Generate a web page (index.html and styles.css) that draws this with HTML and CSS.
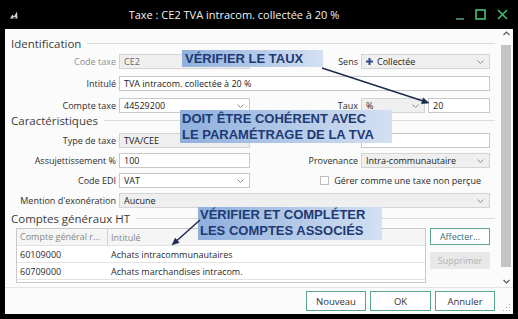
FILE: index.html
```html
<!DOCTYPE html>
<html lang="fr">
<head>
<meta charset="utf-8">
<title>Taxe</title>
<link rel="stylesheet" href="styles.css">
</head>
<body>
<div class="window">
  <header class="titlebar">
    <svg class="app-icon" width="9" height="8" viewBox="0 0 9 8"><path d="M1 7.5 L3.5 3.5 L5 5.5 L8 0.5 L8.5 7.5 Z" fill="#d6d6d6"/><rect x="4.5" y="6" width="2" height="1.5" fill="#000"/></svg>
    <div class="title">Taxe : CE2 TVA intracom. collectée à 20 %</div>
    <div class="controls">
      <svg width="10" height="11" viewBox="0 0 10 11"><line x1="1" y1="10" x2="9" y2="10" stroke="#5f9d7b" stroke-width="1.5"/></svg>
      <svg width="11" height="11" viewBox="0 0 11 11"><rect x="1" y="1" width="9" height="9" fill="none" stroke="#3dbb6c" stroke-width="1.7"/></svg>
      <svg width="11" height="11" viewBox="0 0 11 11"><path d="M1 1 L10 10 M10 1 L1 10" stroke="#3dbb6c" stroke-width="1.7" fill="none"/></svg>
    </div>
  </header>

  <div class="client">
    <div class="main">
      <div class="form">
        <div class="section-head">Identification</div>
        <div class="grid grid-ident">
          <div class="lbl muted">Code taxe</div>
          <div class="field grey muted-text">CE2</div>
          <div class="lbl">Sens</div>
          <div class="field grey select"><span class="sel-val"><svg class="plus" width="7" height="7" viewBox="0 0 7 7"><path d="M3.5 0 V7 M0 3.5 H7" stroke="#2c4a88" stroke-width="2"/></svg>Collectée</span><svg class="chev" width="7" height="4" viewBox="0 0 7 4"><path d="M0.5 0.5 L3.5 3.5 L6.5 0.5" fill="none" stroke="#8a8a8a"/></svg></div>

          <div class="lbl">Intitulé</div>
          <div class="field span3">TVA intracom. collectée à 20 %</div>

          <div class="lbl">Compte taxe</div>
          <div class="field select"><span>44529200</span><svg class="chev" width="7" height="4" viewBox="0 0 7 4"><path d="M0.5 0.5 L3.5 3.5 L6.5 0.5" fill="none" stroke="#8a8a8a"/></svg></div>
          <div class="lbl">Taux</div>
          <div class="pair">
            <div class="field grey select rate"><span>%</span><svg class="chev" width="7" height="4" viewBox="0 0 7 4"><path d="M0.5 0.5 L3.5 3.5 L6.5 0.5" fill="none" stroke="#8a8a8a"/></svg></div>
            <div class="field value">20</div>
          </div>
        </div>

        <div class="section-head">Caractéristiques</div>
        <div class="grid grid-carac">
          <div class="lbl">Type de taxe</div>
          <div class="field grey">TVA/CEE</div>
          <div class="lbl"></div>
          <div class="field"></div>

          <div class="lbl">Assujettissement %</div>
          <div class="field">100</div>
          <div class="lbl">Provenance</div>
          <div class="field grey select"><span>Intra-communautaire</span><svg class="chev" width="7" height="4" viewBox="0 0 7 4"><path d="M0.5 0.5 L3.5 3.5 L6.5 0.5" fill="none" stroke="#8a8a8a"/></svg></div>

          <div class="lbl">Code EDI</div>
          <div class="field select"><span>VAT</span><svg class="chev" width="7" height="4" viewBox="0 0 7 4"><path d="M0.5 0.5 L3.5 3.5 L6.5 0.5" fill="none" stroke="#8a8a8a"/></svg></div>
          <div class="check-cell"><span class="checkbox"></span><span>Gérer comme une taxe non perçue</span></div>

          <div class="lbl">Mention d'exonération</div>
          <div class="field grey select span3"><span>Aucune</span><svg class="chev" width="7" height="4" viewBox="0 0 7 4"><path d="M0.5 0.5 L3.5 3.5 L6.5 0.5" fill="none" stroke="#8a8a8a"/></svg></div>
        </div>

        <div class="section-head head-accounts">Comptes généraux HT</div>
        <div class="accounts">
          <div class="table">
            <div class="thead"><div class="c1">Compte général r...</div><div class="c2">Intitulé</div></div>
            <div class="trow"><div class="c1">60109000</div><div class="c2">Achats intracommunautaires</div></div>
            <div class="trow"><div class="c1">60709000</div><div class="c2">Achats marchandises intracom.</div></div>
          </div>
          <div class="side">
            <button class="btn">Affecter...</button>
            <button class="btn disabled">Supprimer</button>
          </div>
        </div>
      </div>

      <div class="scrollbar">
        <div class="sb-up"><svg width="7" height="5" viewBox="0 0 7 5"><path d="M0.5 4 L3.5 1 L6.5 4" fill="none" stroke="#555" stroke-width="1.1"/></svg></div>
        <div class="sb-thumb"></div>
        <div class="sb-down"><svg width="7" height="5" viewBox="0 0 7 5"><path d="M0.5 1 L3.5 4 L6.5 1" fill="none" stroke="#555" stroke-width="1.1"/></svg></div>
      </div>
    </div>

    <footer class="footer">
      <button class="fbtn">Nouveau</button>
      <button class="fbtn ok">OK</button>
      <button class="fbtn">Annuler</button>
      <svg class="grip" width="8" height="8" viewBox="0 0 8 8"><g fill="#a9a9a9"><rect x="6" y="0" width="1" height="1"/><rect x="6" y="3" width="1" height="1"/><rect x="3" y="3" width="1" height="1"/><rect x="6" y="6" width="1" height="1"/><rect x="3" y="6" width="1" height="1"/><rect x="0" y="6" width="1" height="1"/></g></svg>
    </footer>
  </div>

  <div class="callout c-taux">VÉRIFIER LE TAUX</div>
  <div class="callout c-tva">DOIT ÊTRE COHÉRENT AVEC<br>LE PARAMÉTRAGE DE LA TVA</div>
  <div class="callout c-comptes">VÉRIFIER ET COMPLÉTER<br>LES COMPTES ASSOCIÉS</div>

  <svg class="arrows" width="518" height="319" viewBox="0 0 518 319">
    <g stroke="#1c2b50" stroke-width="1.5" fill="#1c2b50">
      <line x1="322" y1="68" x2="423" y2="101"/>
      <polygon points="429,103 421.4,103.7 423.3,97.9" stroke-width="0.5"/>
      <line x1="200" y1="220" x2="177" y2="240.5"/>
      <polygon points="172,245 175.2,238.1 179.2,242.6" stroke-width="0.5"/>
    </g>
  </svg>
</div>
</body>
</html>
```

FILE: styles.css
```css
* {
  box-sizing: border-box;
  margin: 0;
  padding: 0;
}

html, body {
  width: 518px;
  height: 319px;
  overflow: hidden;
  background: #000;
}

body {
  font-family: "Open Sans", "Noto Sans", sans-serif;
  font-size: 9px;
  color: #2a2a2a;
}

.window {
  position: relative;
  width: 518px;
  height: 319px;
  display: flex;
  flex-direction: column;
  background: #000;
}

/* Title bar */
.titlebar {
  height: 29px;
  flex: none;
  display: flex;
  align-items: center;
}

.app-icon {
  flex: none;
  margin-left: 9px;
}

.title {
  flex: 1;
  text-align: center;
  color: #f0f0f0;
  font-size: 11px;
  white-space: nowrap;
}

.controls {
  flex: none;
  width: 68px;
  display: flex;
  align-items: center;
  gap: 10px;
  padding-left: 5px;
}

.controls svg:last-child {
  margin-left: 1px;
}

/* Client area */
.client {
  flex: 1;
  margin: 0 5px 5px;
  background: #fbfbfb;
  display: flex;
  flex-direction: column;
}

.main {
  height: 258px;
  flex: none;
  display: flex;
}

.form {
  width: 495px;
  padding-top: 7px;
}

.section-head {
  height: 14px;
  display: flex;
  align-items: center;
  gap: 6px;
  padding: 0 5px 0 6px;
  font-size: 11.5px;
  color: #3c3c3c;
  white-space: nowrap;
}

.section-head::after {
  content: "";
  flex: 1;
  height: 1px;
  background: #dcdcdc;
}

.head-accounts {
  margin-top: 3px;
}

.grid {
  display: grid;
  grid-template-columns: 111px 131px 105px 129px;
  grid-auto-rows: 15px;
  column-gap: 3px;
}

.grid-ident {
  margin-top: 4px;
  row-gap: 7px;
  margin-bottom: 0;
}

.grid-carac {
  margin-top: 6px;
  row-gap: 5px;
}

.lbl {
  text-align: right;
  line-height: 15px;
  white-space: nowrap;
  color: #2e2e2e;
}

.lbl.muted {
  color: #8f8f8f;
}

.field {
  border: 1px solid #c8c8c8;
  background: #fff;
  line-height: 13px;
  padding-left: 4px;
  white-space: nowrap;
  overflow: hidden;
  color: #222;
}

.field.grey {
  background: #efefef;
  border-color: #d4d4d4;
}

.muted-text {
  color: #666;
}

.select {
  display: flex;
  align-items: center;
  justify-content: space-between;
  padding-right: 5px;
}

.sel-val {
  display: flex;
  align-items: center;
  gap: 4px;
}

.span3 {
  grid-column: 2 / 5;
}

.pair {
  display: flex;
  gap: 3px;
}

.pair .rate {
  width: 64px;
  flex: none;
}

.pair .value {
  flex: 1;
}

.check-cell {
  grid-column: 3 / 5;
  display: flex;
  align-items: center;
  justify-content: flex-end;
  gap: 5px;
  padding-right: 9px;
  white-space: nowrap;
}

.checkbox {
  width: 9px;
  height: 9px;
  border: 1px solid #bdbdbd;
  background: #fff;
}

/* Accounts table */
.accounts {
  margin: 3px 0 0 11px;
  display: flex;
  gap: 4px;
}

.table {
  width: 410px;
  height: 55px;
  border: 1px solid #c9c9c9;
  background: #fff;
}

.thead,
.trow {
  height: 17px;
  display: flex;
  align-items: center;
  border-bottom: 1px solid #e2e2e2;
  white-space: nowrap;
}

.thead {
  background: #f5f5f5;
  color: #878787;
}

.c1 {
  width: 91px;
  padding-left: 3px;
  flex: none;
}

.thead .c1 {
  height: 100%;
  line-height: 16px;
  border-right: 1px solid #d3d3d3;
}

.c2 {
  padding-left: 3px;
}

.side {
  width: 60px;
  display: flex;
  flex-direction: column;
  gap: 7px;
}

.btn {
  height: 17px;
  border: 1px solid #5aa789;
  background: #fff;
  font: inherit;
  color: #3b6e5e;
}

.btn.disabled {
  border-color: #e8e8e8;
  background: #e8e8e8;
  color: #b4b4b4;
}

/* Scrollbar */
.scrollbar {
  width: 12px;
  display: flex;
  flex-direction: column;
  align-items: center;
}

.sb-up {
  height: 16px;
  padding-top: 2px;
  display: flex;
  justify-content: center;
}

.sb-thumb {
  width: 10px;
  height: 222px;
  background: #c4c4c4;
}

.sb-down {
  flex: 1;
  padding-top: 12px;
  display: flex;
  justify-content: center;
}

/* Footer */
.footer {
  flex: 1;
  border-top: 1px solid #e3e3e3;
  display: flex;
  justify-content: flex-end;
  align-items: flex-start;
  gap: 4px;
  padding: 3px 2px 0 0;
}

.fbtn {
  width: 60px;
  height: 20px;
  border: 1px solid #58a688;
  background: #fff;
  font: inherit;
  font-size: 9.5px;
  color: #333;
}

.fbtn.ok {
  width: 61px;
}

.grip {
  align-self: flex-end;
  margin: 0 0 2px 4px;
}

/* Annotation overlays */
.callout {
  position: absolute;
  background: linear-gradient(to right, #8fafdd, #d4e0f2);
  color: #1d3a73;
  font-family: "Liberation Sans", Arial, sans-serif;
  font-weight: bold;
  font-size: 13px;
  white-space: nowrap;
}

.c-taux {
  left: 182px;
  top: 50px;
  width: 141px;
  height: 17px;
  line-height: 17px;
  padding-left: 3px;
}

.c-tva {
  left: 180px;
  top: 110px;
  width: 212px;
  height: 33px;
  line-height: 16px;
  padding: 1px 0 0 2px;
}

.c-comptes {
  left: 198px;
  top: 207px;
  width: 184px;
  height: 33px;
  line-height: 16px;
  padding: 0 0 0 2px;
}

.arrows {
  position: absolute;
  left: 0;
  top: 0;
  pointer-events: none;
}
```
